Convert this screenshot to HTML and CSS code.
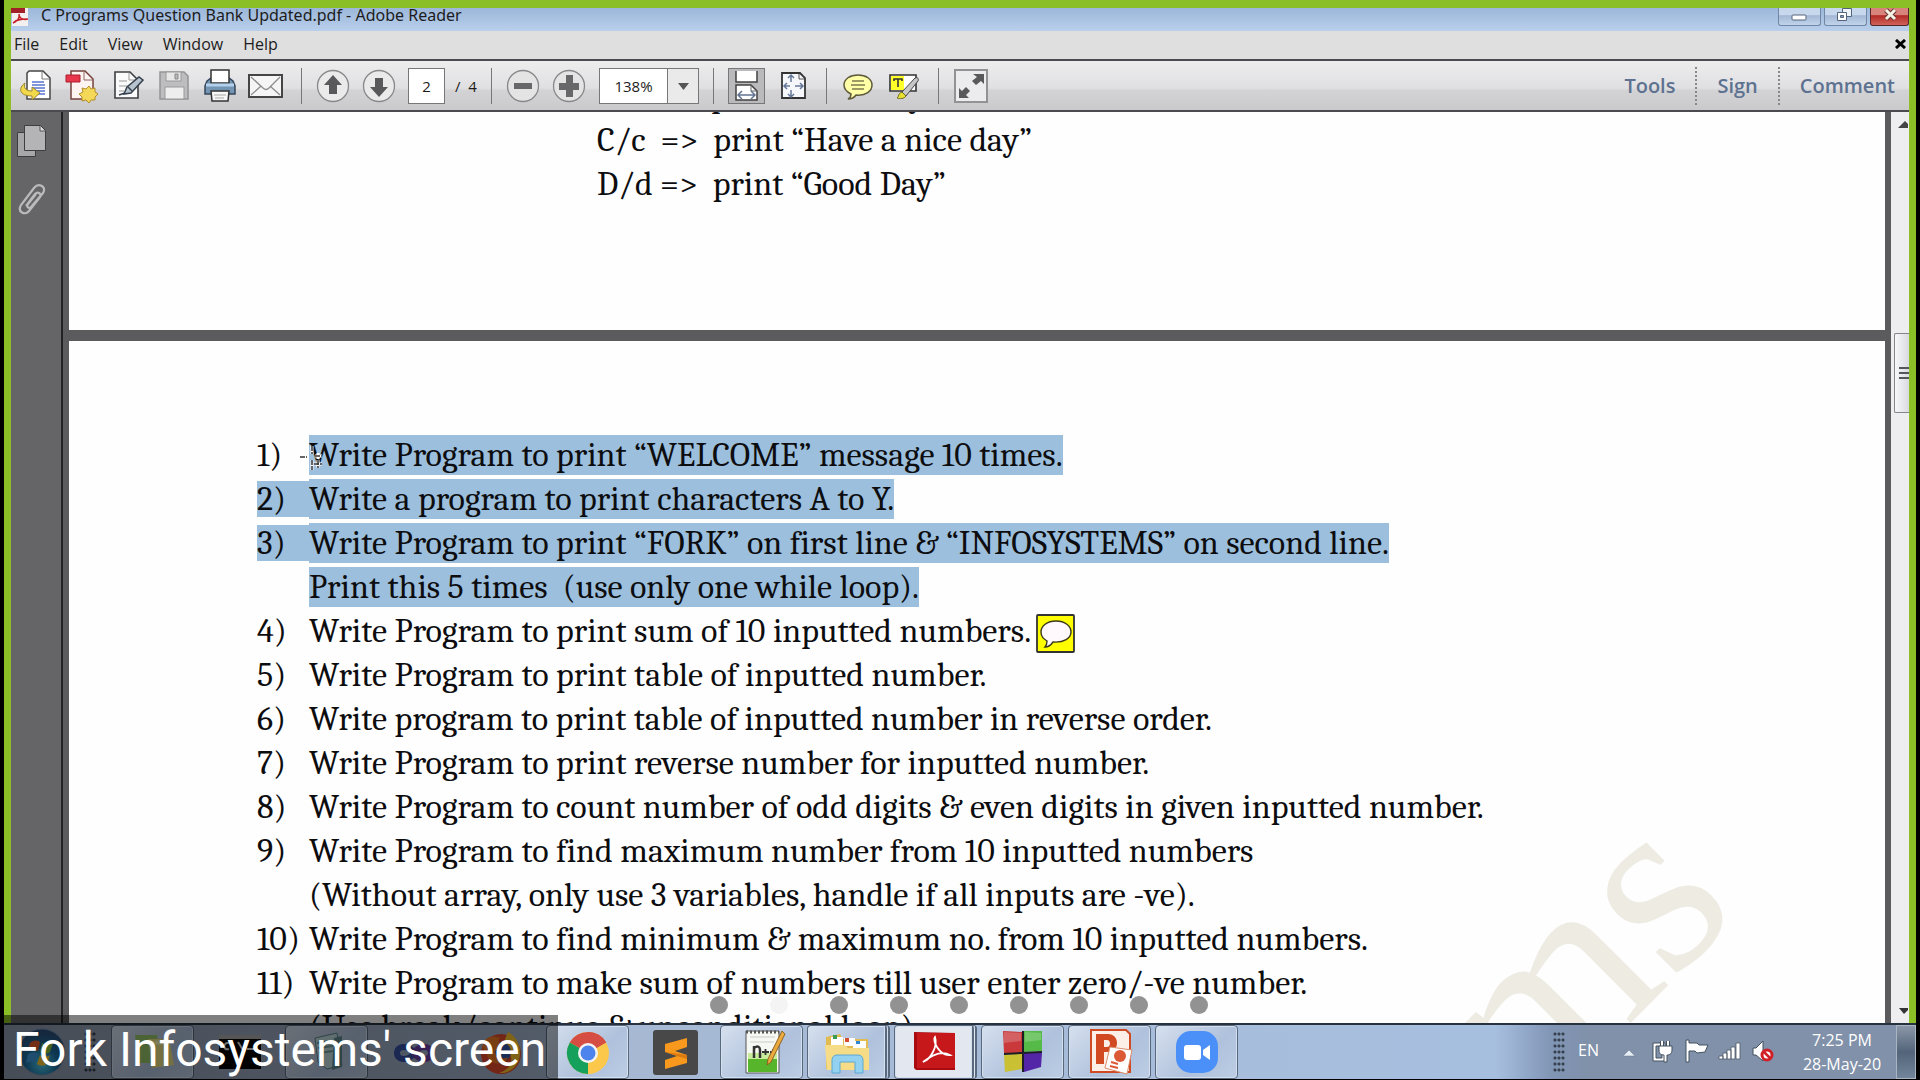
FILE: index.html
```html
<!DOCTYPE html>
<html lang="en">
<head>
<meta charset="utf-8">
<title>C Programs Question Bank Updated.pdf - Adobe Reader</title>
<link rel="stylesheet" href="styles.css">
</head>
<body>
<div class="desktop">
<div class="window">
  <header class="titlebar">
    <svg class="app-icon" width="18" height="18" viewBox="0 0 18 18"><path d="M1 0h16v18H1z" fill="#f5f0f0"/><path d="M0 0h14v5H0z" fill="#a22128"/><path d="M2 15c4-1 7-5 6-9M8 7c1 4 5 5 9 4M2 15c4-4 9-4 14-4" stroke="#c5202a" stroke-width="1.6" fill="none"/></svg>
    <h1 class="title">C Programs Question Bank Updated.pdf - Adobe Reader</h1>
    <div class="win-buttons">
      <button class="win-btn" aria-label="Minimize"><svg width="43" height="18" viewBox="0 0 43 18"><rect x="14" y="7" width="14" height="5" rx="1" fill="#fff" stroke="#54647c"/></svg></button>
      <button class="win-btn" aria-label="Restore"><svg width="43" height="18" viewBox="0 0 43 18"><path d="M18.500.5h9v8h-9z" fill="#eef3fa" stroke="#54647c"/><path d="M13.500 4.500h9v8h-9z" fill="#fff" stroke="#54647c"/><path d="M16.500 7.500h3v2h-3z" fill="#8ca0bd" stroke="#54647c"/></svg></button>
      <button class="win-btn win-close" aria-label="Close"><svg width="39" height="18" viewBox="0 0 39 18"><path d="M16 2l9 9M25 2l-9 9" stroke="#6b3030" stroke-width="5"/><path d="M16 2l9 9M25 2l-9 9" stroke="#f3f2e4" stroke-width="3"/></svg></button>
    </div>
  </header>
  <nav class="menubar">
    <button>File</button><button>Edit</button><button>View</button><button>Window</button><button>Help</button>
    <button class="doc-close" aria-label="Close document"><svg width="11" height="10" viewBox="0 0 11 10"><path d="M1 1l9 8M10 1L1 9" stroke="#000" stroke-width="3"/></svg></button>
  </nav>
  <div class="toolbar">
    <div class="group">
      <button class="tool" aria-label="Convert"><svg width="34" height="34" viewBox="0 0 34 34"><path d="M10 2h14l7 7v21H8V4z" fill="#fff" stroke="#454545" stroke-width="1.500"/><path d="M23 3v7h7" fill="none" stroke="#777"/><path d="M13 13h12M13 16h13M13 19h13M15 22h11M17 25h9" stroke="#5874cf" stroke-width="1.500"/><path d="M6 14c-7 5-6 13 7 13v4l8-7-8-6v4c-6 0-9-3-7-8z" fill="#f2d94c" stroke="#9a832c"/></svg></button>
      <button class="tool" aria-label="Create PDF"><svg width="34" height="34" viewBox="0 0 34 34"><path d="M6 2h14l8 8v20H6z" fill="#fdf4f2" stroke="#75403c" stroke-width="1.500"/><path d="M19 3v8h8" fill="none" stroke="#8d6560"/><path d="M1 6h14v7H1z" fill="#e8374a" stroke="#ab1e2f"/><path d="M24 17l2 3 4-1v4l3 2-3 3v3h-4l-2 3-3-3-4 1v-4l-3-3 4-2-1-4 4 1z" fill="#f4d858" stroke="#b28e2b"/></svg></button>
      <button class="tool" aria-label="Edit"><svg width="34" height="34" viewBox="0 0 34 34"><path d="M4 3h15l8 8v18H4z" fill="#fafafa" stroke="#3c3f42" stroke-width="1.600"/><path d="M18 4v7h8M8 12h8M8 17h8M8 22h5" fill="none" stroke="#999"/><path d="M13 25l3-7L28 8l4 3-12 13z" fill="#b7c3cf" stroke="#36414c" stroke-width="1.500"/><path d="M8 26l6-2M17 18l4 4" stroke="#36414c" stroke-width="1.500"/></svg></button>
      <button class="tool" aria-label="Save"><svg width="34" height="34" viewBox="0 0 34 34"><path d="M3 3h24l4 4v23H3z" fill="#bdbdc0" stroke="#949497" stroke-width="1.500"/><path d="M9 3h15v9H9z" fill="#e7e7e8" stroke="#999"/><path d="M18 5h3v5h-3z" fill="#bbb" stroke="#888"/><path d="M8 18h19v12H8z" fill="#eee" stroke="#999"/></svg></button>
      <button class="tool" aria-label="Print"><svg width="34" height="34" viewBox="0 0 34 34"><path d="M4 12l4-3h18l4 3 2 5v8H2v-8z" fill="#7494b4" stroke="#34475b" stroke-width="1.500"/><path d="M8 1h18v13H8z" fill="#fff" stroke="#333" stroke-width="1.500"/><path d="M3 16h28" stroke="#b3d0ec" stroke-width="3"/><path d="M8 22h18l-1 10H9z" fill="#f6f6f6" stroke="#333" stroke-width="1.500"/><path d="M11 26h12M12 29h9" stroke="#aaa"/></svg></button>
      <button class="tool" aria-label="Email"><svg width="36" height="34" viewBox="0 0 36 34"><path d="M1 6h33v22H1z" fill="#f5f5f5" stroke="#454545" stroke-width="2"/><path d="M3 8l12 11c2 2 4 2 6 0L32 8M3 26l10-9M32 26l-10-9" fill="none" stroke="#8c8c8c" stroke-width="1.300"/></svg></button>
    </div>
    <div class="group">
      <button class="tool" aria-label="Previous page"><svg width="34" height="34" viewBox="0 0 34 34"><circle cx="17" cy="17" r="15.500" fill="#eaeaeb" stroke="#88888b" stroke-width="1.300"/><path d="M17 6l9 10h-5v9h-8v-9H8z" fill="#59595c"/></svg></button>
      <button class="tool" aria-label="Next page"><svg width="34" height="34" viewBox="0 0 34 34"><circle cx="17" cy="17" r="15.500" fill="#eaeaeb" stroke="#88888b" stroke-width="1.300"/><path d="M17 28l9-10h-5V9h-8v9H8z" fill="#59595c"/></svg></button>
      <input class="page-input" aria-label="Page number" value="2"><span class="page-total">/&nbsp; 4</span>
    </div>
    <div class="group">
      <button class="tool" aria-label="Zoom out"><svg width="34" height="34" viewBox="0 0 34 34"><circle cx="17" cy="17" r="15.500" fill="#e4e4e5" stroke="#88888b" stroke-width="1.300"/><path d="M8 14h18v6H8z" fill="#68686b"/></svg></button>
      <button class="tool" aria-label="Zoom in"><svg width="34" height="34" viewBox="0 0 34 34"><circle cx="17" cy="17" r="15.500" fill="#e4e4e5" stroke="#88888b" stroke-width="1.300"/><path d="M14 6h7v8h6v7h-6v7h-7v-7H7v-7h7z" fill="#68686b"/></svg></button>
      <div class="zoom"><input aria-label="Zoom level" value="138%"><button aria-label="Zoom presets"><svg width="30" height="34" viewBox="0 0 30 34"><path d="M10 14h11l-5.500 7z" fill="#555"/></svg></button></div>
    </div>
    <div class="group group-view">
      <button class="tool tool-mode pressed" aria-label="Fit width, scrolling"><svg width="35" height="34" viewBox="0 0 35 34"><path d="M7 2v11h21V2M7 31V16h15l6 6v9z" fill="#fff" stroke="#424242" stroke-width="1.500"/><path d="M22 16v6h6" fill="none" stroke="#666"/><path d="M9 26h17M13 22l-4 4 4 4M22 22l4 4-4 4" fill="none" stroke="#617393" stroke-width="1.500"/></svg></button>
      <button class="tool tool-fit" aria-label="Fit page"><svg width="28" height="34" viewBox="0 0 28 34"><path d="M2 4h18l5 5v20H2z" fill="#f6f7fa" stroke="#333" stroke-width="1.800"/><path d="M19 5v5h5" fill="none" stroke="#555"/><path d="M11 6v7M11 28v-7M4 17h6M15 17h8M8 9l3-3 3 3M8 25l3 3 3-3M7 14l-3 3 3 3M20 14l3 3-3 3" fill="none" stroke="#667899" stroke-width="1.500"/></svg></button>
    </div>
    <div class="group">
      <button class="tool" aria-label="Add note"><svg width="32" height="34" viewBox="0 0 32 34"><path d="M16 6c-8 0-14 4-14 10 0 5 3 7 7 9 0 2-1 4-3 5 4 0 6-1 8-4 10 1 16-4 16-10S24 6 16 6z" fill="#ffffa8" stroke="#5e5a3a" stroke-width="1.500"/><path d="M10 12h12M9 16h14M10 20h12" stroke="#7d7b4c" stroke-width="1.300"/></svg></button>
      <button class="tool" aria-label="Highlight text"><svg width="34" height="34" viewBox="0 0 34 34"><path d="M3 6h26v16H3z" fill="#fff" stroke="#333" stroke-width="1.600"/><path d="M4 7h13v14H4z" fill="#ffff2a"/><path d="M7 12v-2h8v2M11 10v8" fill="none" stroke="#333" stroke-width="1.600"/><path d="M15 23l13-14c3-1 4 1 3 3L19 27z" fill="#c6c6c8" stroke="#444"/><path d="M10 29c2-1 1-5 5-6l4 4c-2 3-6 3-9 2z" fill="#e8e02f" stroke="#6e6a22"/></svg></button>
    </div>
    <div class="group group-full">
      <button class="tool-full" aria-label="Full screen"><svg width="34" height="34" viewBox="0 0 34 34"><path d="M1 1h32v32H1z" fill="#ececee" stroke="#929295" stroke-width="2"/><path d="M19 5h11v10l-3-3-5 4-4-4 5-4zM5 29V19l3 3 4-4 4 4-4 4 3 3z" fill="#59595c"/></svg></button>
    </div>
    <div class="panes"><button>Tools</button><button>Sign</button><button>Comment</button></div>
  </div>
  <div class="workarea">
    <aside class="sidebar">
      <button aria-label="Page thumbnails"><svg width="32" height="34" viewBox="0 0 32 34"><path d="M1.500 8.500h18v24h-18z" fill="#a7a7a9" stroke="#3e3e40"/><path d="M8.500 1.500h16l5 5v20h-21z" fill="#b4b4b6" stroke="#3e3e40"/><path d="M24 2v5h5" fill="#ddd" stroke="#555"/></svg></button>
      <button aria-label="Attachments"><svg width="32" height="36" viewBox="0 0 32 36"><path d="M10 23L19 11c3-3 7 0 5 3L13 28c-4 5-12 1-8-6L18 5c5-6 13-1 9 5L15 24c-2 2-5 0-3-3l8-10" fill="none" stroke="#bababc" stroke-width="2.200"/></svg></button>
    </aside>
    <main class="document">
      <section class="page page-one">
        <p>B/b =&gt;&nbsp; print “Nice Day”</p>
        <p>C/c&nbsp; =&gt;&nbsp; print “Have a nice day”</p>
        <p>D/d =&gt;&nbsp; print “Good Day”</p>
      </section>
      <section class="page page-two">
        <div class="watermark">Fork Infosystems</div>
        <ol class="questions">
          <li><span class="num">1)</span><span><mark>Write Program to print “WELCOME” message 10 times.</mark></span></li>
          <li class="picked"><span class="num">2)</span><span><mark>Write a program to print characters A to Y.</mark></span></li>
          <li class="picked"><span class="num">3)</span><span><mark>Write Program to print “FORK” on first line &amp; “INFOSYSTEMS” on second line.</mark><br><mark>Print this 5 times&nbsp; (use only one while loop).</mark></span></li>
          <li><span class="num">4)</span><span>Write Program to print sum of 10 inputted numbers.</span><button class="note" aria-label="Open note"><svg width="39" height="39" viewBox="0 0 39 39"><rect x="1" y="1" width="37" height="37" rx="1" fill="#ff0" stroke="#333" stroke-width="1.800"/><path d="M20 7C11 7 5 12 5 18c0 5 3 7 6 9 0 2 0 4-2 6 4 0 6-2 8-5 11 1 18-4 18-10S29 7 20 7z" fill="#fff8fc" stroke="#39391c" stroke-width="1.400"/></svg></button></li>
          <li><span class="num">5)</span><span>Write Program to print table of inputted number.</span></li>
          <li><span class="num">6)</span><span>Write program to print table of inputted number in reverse order.</span></li>
          <li><span class="num">7)</span><span>Write Program to print reverse number for inputted number.</span></li>
          <li><span class="num">8)</span><span>Write Program to count number of odd digits &amp; even digits in given inputted number.</span></li>
          <li><span class="num">9)</span><span>Write Program to find maximum number from 10 inputted numbers<br>(Without array, only use 3 variables, handle if all inputs are -ve).</span></li>
          <li><span class="num">10)</span><span>Write Program to find minimum &amp; maximum no. from 10 inputted numbers.</span></li>
          <li><span class="num">11)</span><span>Write Program to make sum of numbers till user enter zero/-ve number.<br>(Use break/continue &amp; unconditional loop)</span></li>
        </ol>
        <svg class="cursor" width="24" height="26" viewBox="0 0 24 26"><path d="M0 11h7M12 0v8M12 14v10M15 10h7M18 7v6M14 18h8M18 14v8" stroke="#fff" stroke-width="3"/><path d="M0 11h7M12 0v8M12 14v10M15 10h7M14 18h8M18 14v8" stroke="#333" stroke-width="1.500" stroke-dasharray="5 1"/></svg>
      </section>
    </main>
    <div class="scrollbar">
      <svg width="17" height="22" viewBox="0 0 17 22"><path d="M7 16l7-7 3 3v4z" fill="#444"/></svg>
      <div class="thumb"><i></i><i></i><i></i></div>
      <svg width="17" height="22" viewBox="0 0 17 22"><path d="M8 7h9v2l-4 4z" fill="#333"/></svg>
    </div>
  </div>
</div>
<div class="dots"><i></i><i class="on"></i><i></i><i></i><i></i><i></i><i></i><i></i><i></i></div>
<footer class="taskbar">
  <button class="start" aria-label="Start"><svg width="48" height="50" viewBox="0 0 48 50"><defs><radialGradient id="orb" cx=".5" cy=".75" r=".7"><stop offset="0" stop-color="#4fd0ee"/><stop offset=".5" stop-color="#1c6fa3"/><stop offset="1" stop-color="#2b4f78"/></radialGradient></defs><circle cx="24" cy="25" r="23" fill="url(#orb)" stroke="#6d8eaf"/><path d="M12 16c4-3 7-3 10-1l-2 9c-3-2-7-2-10 0z" fill="#e8602c"/><path d="M24 16c4 2 8 2 11 0l-3 9c-3 2-7 2-10 0z" fill="#8cc63e"/><path d="M10 27c3-2 7-2 10 0l-3 9c-3-2-6-2-9 0z" fill="#3c9be0"/><path d="M22 28c3 2 7 2 10 0l-3 9c-3 2-7 2-10 0z" fill="#fbc92e"/></svg></button>
  <div class="grip"></div>
  <button class="task" aria-label="Sticky Notes"><svg width="48" height="48" viewBox="0 0 48 48"><path d="M6 7h22l3 28H10z" fill="#97c66a"/><path d="M19 11h21l5 26-22 3z" fill="#ebe184"/><path d="M23 15l16-1" stroke="#fff8b0" stroke-width="4"/></svg></button>
  <button class="task plain" aria-label="Command Prompt"><svg width="48" height="48" viewBox="0 0 48 48"><path d="M3 7h42v34H3z" fill="#050505"/><path d="M3 7h42v4H3z" fill="#aaa"/><path d="M14 15c-7-2-8 8-1 6M18 15v0M18 18v4M22 14l5 8M31 21h7" fill="none" stroke="#ddd" stroke-width="2"/></svg></button>
  <button class="task" aria-label="Notebook"><svg width="48" height="48" viewBox="0 0 48 48"><path d="M12 10l22-5 5 32-15 4-9-7z" fill="#c3dddf" stroke="#59868b"/><path d="M31 10l8-2v31l-10 3z" fill="#5c898c"/><path d="M14 15l15-2M15 20l15-2M16 25l14-2" stroke="#6e9ba0" stroke-width="2"/></svg></button>
  <button class="task plain" aria-label="Developer Studio"><svg width="48" height="48" viewBox="0 0 48 48"><path d="M24 25c-5-8-17-8-17 0s12 8 17 0" fill="none" stroke="#3450a4" stroke-width="6"/><path d="M24 25c5-8 17-8 17 0s-12 8-17 0z" fill="none" stroke="#6c3fa5" stroke-width="6"/></svg></button>
  <button class="task plain" aria-label="Firefox"><svg width="48" height="48" viewBox="0 0 48 48"><circle cx="24" cy="26" r="20" fill="#e64b2d"/><path d="M31 4c11 6 14 18 11 28-3 8-11 14-20 13 15-5 15-17 7-23-4-3-1-12 2-18z" fill="#ffc72e"/><circle cx="24" cy="24" r="10" fill="#345ab0"/><path d="M5 20C6 10 14 6 23 10c-3 3-1 5 4 6-5 2-3 5-9 7 1 8 7 9 13 6-3 8-14 9-19 2-3-4-2-9-7-11z" fill="#f27a26"/></svg></button>
  <button class="task" aria-label="Chrome"><svg width="48" height="48" viewBox="0 0 48 48"><circle cx="24" cy="25" r="21" fill="#fbc84b"/><path d="M24 25L5.800 14.500A21 21 0 0 1 42.200 14.500z" fill="#d64e43"/><path d="M5.800 14.500L24 25v21A21 21 0 0 1 5.800 14.500z" fill="#15a05b"/><path d="M24 46l11-19-11-2z" fill="#fbc84b"/><path d="M24 4v11l18.200-.5A21 21 0 0 0 24 4z" fill="#d64e43"/><circle cx="24" cy="25" r="10" fill="#f3f3f3"/><circle cx="24" cy="25" r="7.500" fill="#4c83ed"/></svg></button>
  <button class="task plain" aria-label="Sublime Text"><svg width="48" height="48" viewBox="0 0 48 48"><rect x="2" y="2" width="45" height="45" rx="3" fill="#484848"/><path d="M36 10v9l-12 4 12 4v8l-22 6v-9l12-4-12-4v-8z" fill="#f8981d"/><path d="M14 24l22 3v4l-10-3z" fill="#d97b10"/></svg></button>
  <button class="task" aria-label="Notepad++"><svg width="48" height="48" viewBox="0 0 48 48"><path d="M8 3h33v42H8z" fill="#f6f8f4" stroke="#555"/><path d="M10 31h29v13H10z" fill="#56b52b"/><path d="M10 25h29v6H10z" fill="#c8ec9c"/><path d="M12 9h25M12 14h24" stroke="#ccc"/><path d="M8 4h33" stroke="#555" stroke-width="3" stroke-dasharray="2 2"/><path d="M16 30V18M16 20c4-3 6-1 6 2v8" fill="none" stroke="#333" stroke-width="2.500"/><path d="M24 24h7M27.500 21v6M32 24h6M35 21v6" stroke="#333" stroke-width="1.800"/><path d="M44 3l3 3-14 28-4 3 1-6z" fill="#eaaa3e" stroke="#8f6123"/></svg></button>
  <button class="task stacked" aria-label="File Explorer"><svg width="48" height="48" viewBox="0 0 48 48"><path d="M3 9l14-3 3 5h25v30H3z" fill="#e2bb50"/><path d="M8 9h12v8H8zM21 10h11v8H21zM30 13h13v8H30z" fill="#fff"/><path d="M10 7h4v4h-4z" fill="#3b9c51"/><path d="M22 10h4v4h-4z" fill="#d44d32"/><path d="M33 13h4v3h-4z" fill="#3288d0"/><path d="M2 17h20l3 3h21v22H4z" fill="#f6dc87"/><path d="M9 45V32c0-3 2-5 5-5h21c3 0 5 2 5 5v13h-8V34H17v11z" fill="#93d1f0" stroke="#5aa8d2"/></svg></button>
  <button class="task stacked active" aria-label="Adobe Reader"><svg width="48" height="48" viewBox="0 0 48 48"><path d="M4 4l41 1v37H6l-2-2z" fill="#a90a10"/><path d="M7 5h38v35H7z" fill="#c6171b"/><path d="M13 34c8-3 15-16 12-25-3 3 4 19 15 18-7-4-17-1-27 7z" fill="none" stroke="#fff" stroke-width="1.800"/></svg></button>
  <button class="task" aria-label="Code::Blocks"><svg width="48" height="48" viewBox="0 0 48 48"><path d="M4 3l19 1v21H5z" fill="#c9393c"/><path d="M25 3h18v20l-18 1z" fill="#56ba48"/><path d="M5 27l18-2v16L6 44z" fill="#c9c033"/><path d="M25 24l18 1-1 14-17 5z" fill="#5326a8"/><path d="M5 4l17 1v8L5 15zM26 4l16 1v7l-16 2z" fill="#fff" opacity=".2"/><path d="M24 3v41M5 26l38-2" stroke="#1d1d25" stroke-width="2"/></svg></button>
  <button class="task" aria-label="PowerPoint"><svg width="48" height="48" viewBox="0 0 48 48"><path d="M5 2h35l4 4v38H5z" fill="#fcefe8" stroke="#cf4b24" stroke-width="2"/><path d="M10 6h12c12 0 12 18 0 18h-4v12h-8zM18 12v7h3c4 0 4-7 0-7z" fill="#d24a22" fill-rule="evenodd"/><path d="M24 19l22 3-5 24-22-6z" fill="#fff" stroke="#db8c6b"/><circle cx="34" cy="28" r="6" fill="#dc5936"/><path d="M25 34l7 2M24 38l8 2" stroke="#dc5936" stroke-width="2"/></svg></button>
  <button class="task" aria-label="Zoom"><svg width="48" height="48" viewBox="0 0 48 48"><rect x="3" y="3" width="42" height="42" rx="15" fill="#4a90f8"/><rect x="11" y="17" width="17" height="15" rx="3" fill="#fff"/><path d="M30 22l7-5v15l-7-5z" fill="#fff"/></svg></button>
  <div class="tray">
    <div class="grip"></div>
    <span class="lang">EN</span>
    <svg class="tray-icon" width="34" height="28" viewBox="0 0 34 28"><path d="M9 18l6-6 6 6z" fill="#e7edf5" stroke="#65788f" stroke-width=".5"/></svg>
    <svg class="tray-icon" width="34" height="28" viewBox="0 0 34 28"><path d="M5 5h12v18H5z" fill="#fff" stroke="#43505f"/><path d="M8 8h6v12H8z" fill="#8091a9" stroke="#43505f"/><path d="M14 3v6M20 3v6" stroke="#43505f" stroke-width="4"/><path d="M14 3v6M20 3v6" stroke="#fff" stroke-width="2"/><path d="M11 8h13v4c0 4-3 5-5 5v7h-3v-7c-3 0-5-1-5-5z" fill="#fff" stroke="#43505f"/></svg>
    <svg class="tray-icon" width="34" height="28" viewBox="0 0 34 28"><path d="M4 2h3v3h8l2 2h9l-3 7-8 1-2-2H7v11H4z" fill="#fff" stroke="#43505f"/></svg>
    <svg class="tray-icon" width="34" height="28" viewBox="0 0 34 28"><path d="M3 18h4v3H3zM7 15h4v6H7zM11 12h4v9h-4zM15 9h4v12h-4zM20 5h4v16h-4z" fill="#fff" stroke="#4c5968" stroke-width=".8"/></svg>
    <svg class="tray-icon" width="34" height="28" viewBox="0 0 34 28"><path d="M3 10h3l7-7v20l-7-6H3z" fill="#fff" stroke="#43505f"/><circle cx="17" cy="17" r="5" fill="#fff" stroke="#d11f28" stroke-width="3"/><path d="M13 13l8 8" stroke="#d11f28" stroke-width="2.500"/></svg>
    <div class="clock"><time>7:25 PM</time><time>28-May-20</time></div>
    <button class="show-desktop" aria-label="Show desktop"></button>
  </div>
</footer>
<div class="caption">Fork Infosystems' screen</div>
</div>
</body>
</html>
```
FILE: styles.css
```css
* { box-sizing: border-box; }
body { margin: 0; background: #000; font-family: "Open Sans", "Noto Sans", sans-serif; color: #1c1c20; }
button { font: inherit; color: inherit; border: 0; background: none; padding: 0; display: flex; align-items: center; justify-content: center; }
input { font: inherit; color: inherit; border: 0; padding: 0; min-width: 0; text-align: center; background: #fff; }
svg { display: block; flex: none; }

.desktop { position: relative; height: 100vh; padding: 0 4px 1px; display: flex; flex-direction: column; overflow: hidden; }
.window { flex: 1; min-height: 0; display: flex; flex-direction: column; border: solid #8bbf26; border-width: 8px 7px 0; }

.titlebar { height: 23px; display: flex; align-items: flex-start; background: linear-gradient(#9cb7d9, #b9cfec); }
.title { flex: 1; margin: 0 0 0 12px; font-size: 16px; line-height: 15px; font-weight: 400; font-family: "Noto Sans", sans-serif; }
.win-buttons { display: flex; gap: 3px; }
.win-btn { width: 43px; height: 18px; border: 1px solid #7187a6; border-top: 0; border-radius: 0 0 3px 3px; overflow: hidden; background: linear-gradient(#c7d7ec 40%, #a4b8d5 45%, #c1d4ec); }
.win-close { width: 39px; border-color: #57262a; background: linear-gradient(#d8837c 40%, #b32a26 45%, #d0635b); }

.menubar { height: 28px; display: flex; align-items: center; gap: 20px; padding: 0 3px 2px; background: #dfdfdf; font-size: 16px; line-height: 24px; }
.doc-close { margin-left: auto; }

.toolbar { height: 53px; display: flex; align-items: center; padding-left: 1px; background: linear-gradient(#ededee, #e0e0e2 55%, #d3d3d5 60%, #cacacc); border: solid #4b4b4f; border-width: 2px 0; }
.group { height: 36px; display: flex; align-items: center; padding: 0 7px 0 8px; border-left: 1px solid #77777a; }
.group:first-child { border: 0; padding: 0 12px 0 1px; }
.tool { width: 46px; height: 36px; }
.page-input { width: 37px; height: 36px; margin-left: 6px; border: 1px solid #77777a; font-size: 15px; }
.page-total { width: 29px; margin: 0 0 0 10px; font-size: 15px; }
.zoom { display: flex; width: 100px; height: 36px; margin: 0 7px; border: 1px solid #77777a; }
.zoom input { flex: 1; font-size: 15px; }
.zoom button { width: 31px; border-left: 1px solid #77777a; background: #eaeaeb; }
.group-view { gap: 15px; padding: 0 18px 0 14px; }
.tool-mode { width: 37px; }
.pressed { border: 1px solid #77777a; background: #bababd; }
.tool-fit { width: 28px; }
.group-full { padding-left: 15px; margin-left: 4px; }
.panes { margin-left: auto; display: flex; align-items: center; font-size: 20px; font-weight: 600; color: #5d7190; }
.panes button { height: 38px; padding: 0 20px; border-left: 2px dotted #88888b; }
.panes button:first-child { border: 0; }
.panes button:last-child { padding-right: 14px; }

.workarea { flex: 1; min-height: 0; display: flex; background: #5b5b5d; }
.sidebar { width: 52px; display: flex; flex-direction: column; gap: 26px; padding: 12px 0 0 5px; background: #656567; border-right: 2px solid #222; }
.sidebar button { width: 32px; height: 34px; }
.document { flex: 1; min-width: 0; margin: 0 6px; display: flex; flex-direction: column; gap: 11px; overflow: hidden; font: 34px/44px Cambria, Caladea, "Liberation Serif", serif; color: #0d0d10; }
.page { background: #fefefe; flex: none; }
.page p { margin: 0; }
.page-one { height: 218px; padding-left: 528px; }
.page-one p:first-child { margin-top: -38px; }
.page-two { position: relative; padding: 92px 0 60px 188px; }
.questions { position: relative; list-style: none; margin: 0; padding: 0; }
.questions li { display: flex; }
.num { width: 52px; flex: none; }
mark { color: inherit; background: #9bbfdc; }
.picked .num { height: 36px; line-height: 36px; margin-top: 4px; background: #9bbfdc; }
.note { margin: 5px 0 0 5px; height: 39px; align-self: flex-start; }
.watermark { position: absolute; right: 143px; top: 358px; font-family: "Liberation Serif", serif; font-size: 255px; line-height: 255px; white-space: nowrap; color: #eeebe3; transform: rotate(-45deg); transform-origin: 100% 84%; }
.cursor { position: absolute; left: 231px; top: 105px; }
.scrollbar { width: 18px; display: flex; flex-direction: column; background: #eeeef1; }
.scrollbar svg:last-child { margin-top: auto; }
.thumb { height: 80px; margin: 199px 0 0 3px; display: flex; flex-direction: column; justify-content: center; align-items: flex-end; gap: 3px; border: 1px solid #85868c; border-right: 0; border-radius: 2px 0 0 2px; background: linear-gradient(90deg, #f8f8fa, #d9dae0); }
.thumb i { width: 10px; height: 2px; background: #55565c; }

.dots { position: absolute; left: 0; right: 0; bottom: 66px; display: flex; gap: 42px; padding-left: 710px; }
.dots i { width: 18px; height: 18px; border-radius: 50%; background: #929292; }
.dots .on { background: #f4f4f4; }

.taskbar { flex: none; height: 56px; display: flex; align-items: center; gap: 4px; border-top: 2px solid #28323f; background: linear-gradient(90deg, #8f9bae, #a6b8d2 30%, #a7bfdf 78%, #8094b4 81%, #8091a9 83%); }
.start { width: 76px; }
.grip { width: 12px; height: 42px; margin-right: 11px; background: radial-gradient(circle, #35414f 1px, transparent 2px) 0 0 / 4px 6px; }
.task { width: 83px; height: 54px; border: 1px solid #58687e; border-radius: 4px; background: linear-gradient(135deg, #d6e0ee, #afc1dc 60%, #bccde4); box-shadow: inset 0 0 0 1px #d5e0ee; }
.task.plain { border-color: transparent; background: none; box-shadow: none; }
.task.stacked { border-right: 5px double #58687e; }
.task.active { background: #e3e7ef; }
.tray { height: 54px; margin-left: auto; display: flex; align-items: center; color: #fff; font-size: 17px; }
.tray .grip { margin: 0; }
.lang { width: 49px; padding-left: 13px; margin-bottom: 4px; font-size: 16px; }
.clock { width: 112px; padding-left: 4px; display: flex; flex-direction: column; align-items: center; font-size: 16px; line-height: 24px; }
.show-desktop { width: 20px; height: 54px; border: 1px solid #aab5c3; background: linear-gradient(#8b97a8, #53647a 50%, #72859b); }
.caption { position: absolute; left: 4px; bottom: 0; width: 554px; height: 65px; padding-left: 9px; font: 48px/70px Roboto, sans-serif; color: #fff; white-space: nowrap; background: rgba(0, 0, 0, .5); }
```
